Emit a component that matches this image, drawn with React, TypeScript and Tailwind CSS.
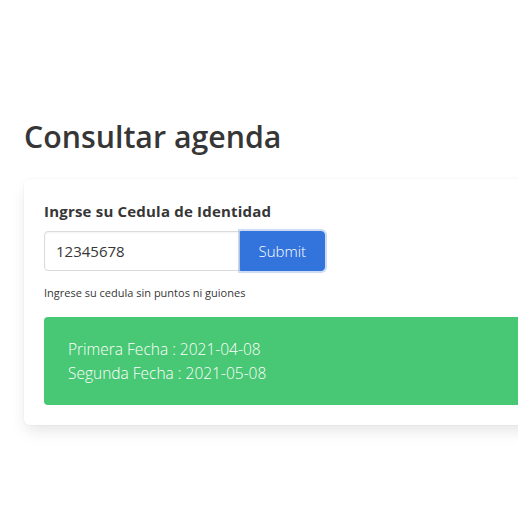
export default function App() {
  return (
    <div
      className="min-h-[531px] w-[518px] overflow-hidden bg-white text-[#4a4a4a]"
      style={{ fontFamily: '"Open Sans", "Noto Sans", sans-serif' }}
    >
      <div className="pl-6 pt-[119px]">
        <h1 className="mb-6 text-[30.3px] leading-[36px] font-semibold text-[#363636]">
          Consultar agenda
        </h1>
        <div className="w-[620px] rounded-md bg-white p-5 shadow-[0_8px_16px_-2px_rgba(10,10,10,0.1),0_0_0_1px_rgba(10,10,10,0.02)]">
          <label className="mb-2 block text-[15px] leading-6 font-bold tracking-[0.2px] text-[#363636]">
            Ingrse su Cedula de Identidad
          </label>
          <div className="flex">
            <input
              readOnly
              value="12345678"
              className="h-10 w-[196px] rounded-l border border-[#dbdbdb] px-[11px] text-[15px] text-[#363636] shadow-[inset_0_1px_2px_rgba(10,10,10,0.05)] outline-none"
            />
            <button className="h-10 rounded-r border border-[#3273dc] bg-[#3273dc] px-[17.5px] text-[15px] font-light text-white shadow-[0_0_0_2px_rgba(50,115,220,0.25)]">
              Submit
            </button>
          </div>
          <p className="mt-[13px] text-[11px] leading-[18px] text-[#363636]">
            Ingrese su cedula sin puntos ni guiones
          </p>
          <div className="mt-[15px] rounded bg-[#48c774] py-5 pl-6 pr-10 text-[15.5px] leading-6 font-light text-white">
            <div>Primera Fecha : 2021-04-08</div>
            <div>Segunda Fecha : 2021-05-08</div>
          </div>
        </div>
      </div>
    </div>
  );
}
